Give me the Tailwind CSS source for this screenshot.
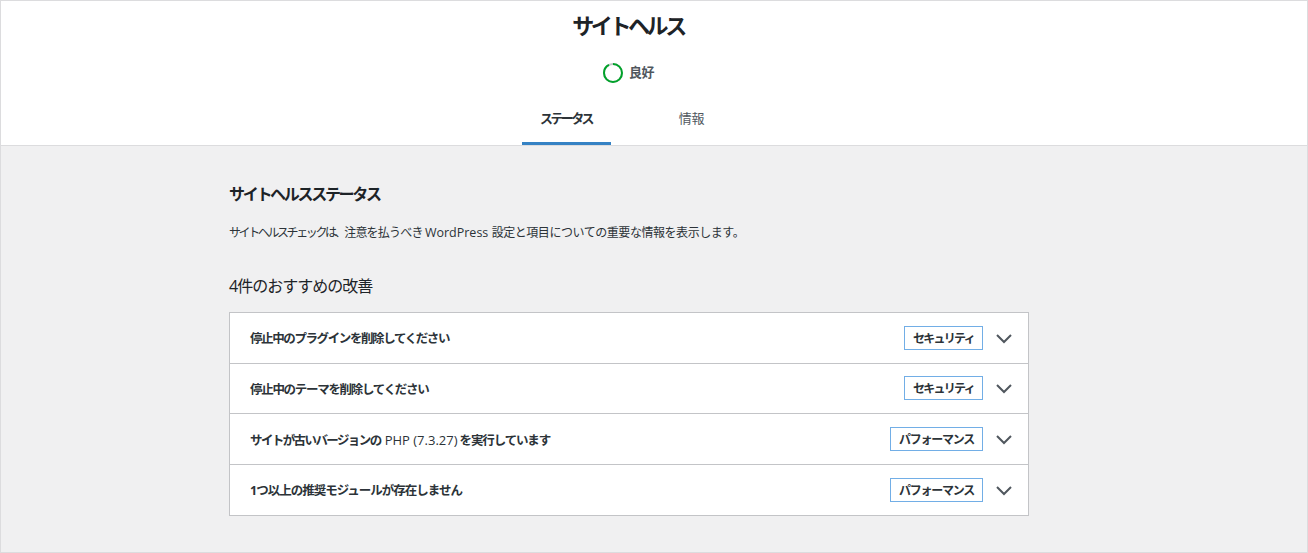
<!DOCTYPE html>
<html lang="ja">
<head>
    <meta charset="UTF-8">
    <title>サイトヘルス</title>
    <script src="https://cdn.jsdelivr.net/npm/@tailwindcss/browser@4"></script>
</head>
<body class="w-[1308px] h-[553px] overflow-hidden bg-[#f0f0f1] text-[#1d2327] font-['Open_Sans','Noto_Sans_CJK_JP',sans-serif]">
    <div class="h-[553px] border border-[#dcdcde] flex flex-col">
        <header class="h-[145px] shrink-0 bg-white border-b border-[#dcdcde] flex flex-col items-center pr-[52px]">
            <h1 class="mt-[6px] h-[36px] text-[22px] leading-[36px] font-bold tracking-[-3.4px]">サイトヘルス</h1>
            <div class="mt-[20px] ml-[1px] h-[20px] flex items-center gap-[6px]">
                <svg class="w-[20px] h-[20px]" viewBox="0 0 20 20">
                    <circle cx="10" cy="10" r="9" fill="none" stroke="#c3c4c7" stroke-width="2"></circle>
                    <circle cx="10" cy="10" r="9" fill="none" stroke="#00a32a" stroke-width="2" stroke-dasharray="52 56.5" transform="rotate(-90 10 10)"></circle>
                </svg>
                <span class="text-[13px] font-bold text-[#50575e] tracking-[-0.4px]">良好</span>
            </div>
            <nav class="mt-[15px] ml-[2px] flex h-[47px]">
                <a class="w-[89px] flex items-center justify-center border-b-[3px] border-[#3582c4] pb-[2px] pr-[1px] text-[13px] font-bold text-[#2c3338] tracking-[-2.6px]">ステータス</a>
                <a class="ml-[36px] w-[89px] flex items-center justify-center border-b-[3px] border-transparent pb-[2px] text-[13px] text-[#50575e] tracking-[-0.3px]">情報</a>
            </nav>
        </header>
        <main class="w-[800px] ml-[228px]">
            <h2 class="mt-[35px] text-[16px] leading-[26px] font-bold tracking-[-2.3px]">サイトヘルスステータス</h2>
            <p class="mt-[16px] text-[12px] leading-[20px] text-[#2c3338] tracking-[-0.8px]"><span class="tracking-[-2.4px]">サイトヘルスチェックは、</span>注意を払うべき <span class="text-[12.5px] tracking-normal">WordPress</span> <span class="ml-[1px] tracking-[-0.45px]">設定と項目についての重要な情報を表示します。</span></p>
            <h3 class="mt-[30px] text-[16px] leading-[26px] font-normal tracking-[-1px]">4件のおすすめの改善</h3>
            <ul class="mt-[13px] bg-white border border-[#c3c4c7] divide-y divide-[#c3c4c7]">
                <li class="h-[50.5px] flex items-center pl-[20px] pr-[15px]">
                    <span class="flex-1 pt-[4px] text-[12.5px] font-bold text-[#2c3338] tracking-[-1.4px]">停止中のプラグインを削除してください</span>
                    <span class="h-[24px] px-[8px] pt-[2px] flex items-center border border-[#72aee6] text-[12px] font-bold text-[#2c3338] tracking-[-1.7px]">セキュリティ</span>
                    <svg class="ml-[12px] mt-[2px] w-[18px] h-[18px]" viewBox="0 0 18 18" fill="none" stroke="#50575e" stroke-width="2"><path d="M2 5l7 7 7-7"></path></svg>
                </li>
                <li class="h-[50.5px] flex items-center pl-[20px] pr-[15px]">
                    <span class="flex-1 pt-[4px] text-[12.5px] font-bold text-[#2c3338] tracking-[-1.3px]">停止中のテーマを削除してください</span>
                    <span class="h-[24px] px-[8px] pt-[2px] flex items-center border border-[#72aee6] text-[12px] font-bold text-[#2c3338] tracking-[-1.7px]">セキュリティ</span>
                    <svg class="ml-[12px] mt-[2px] w-[18px] h-[18px]" viewBox="0 0 18 18" fill="none" stroke="#50575e" stroke-width="2"><path d="M2 5l7 7 7-7"></path></svg>
                </li>
                <li class="h-[50.5px] flex items-center pl-[20px] pr-[15px]">
                    <span class="flex-1 pt-[4px] text-[12.5px] font-bold text-[#2c3338] tracking-[-1.15px]"><span class="tracking-[-1.6px]">サイトが古いバージョンの</span> <span class="ml-[2px] text-[13px] font-normal tracking-normal">PHP (7.3.27)</span> を実行しています</span>
                    <span class="h-[24px] px-[8px] pt-[2px] flex items-center border border-[#72aee6] text-[12px] font-bold text-[#2c3338] tracking-[-1.25px]">パフォーマンス</span>
                    <svg class="ml-[12px] mt-[2px] w-[18px] h-[18px]" viewBox="0 0 18 18" fill="none" stroke="#50575e" stroke-width="2"><path d="M2 5l7 7 7-7"></path></svg>
                </li>
                <li class="h-[50.5px] flex items-center pl-[20px] pr-[15px]">
                    <span class="flex-1 pt-[4px] text-[12.5px] font-bold text-[#2c3338] tracking-[-1px]">1つ以上の推奨モジュールが存在しません</span>
                    <span class="h-[24px] px-[8px] pt-[2px] flex items-center border border-[#72aee6] text-[12px] font-bold text-[#2c3338] tracking-[-1.25px]">パフォーマンス</span>
                    <svg class="ml-[12px] mt-[2px] w-[18px] h-[18px]" viewBox="0 0 18 18" fill="none" stroke="#50575e" stroke-width="2"><path d="M2 5l7 7 7-7"></path></svg>
                </li>
            </ul>
        </main>
    </div>
</body>
</html>
